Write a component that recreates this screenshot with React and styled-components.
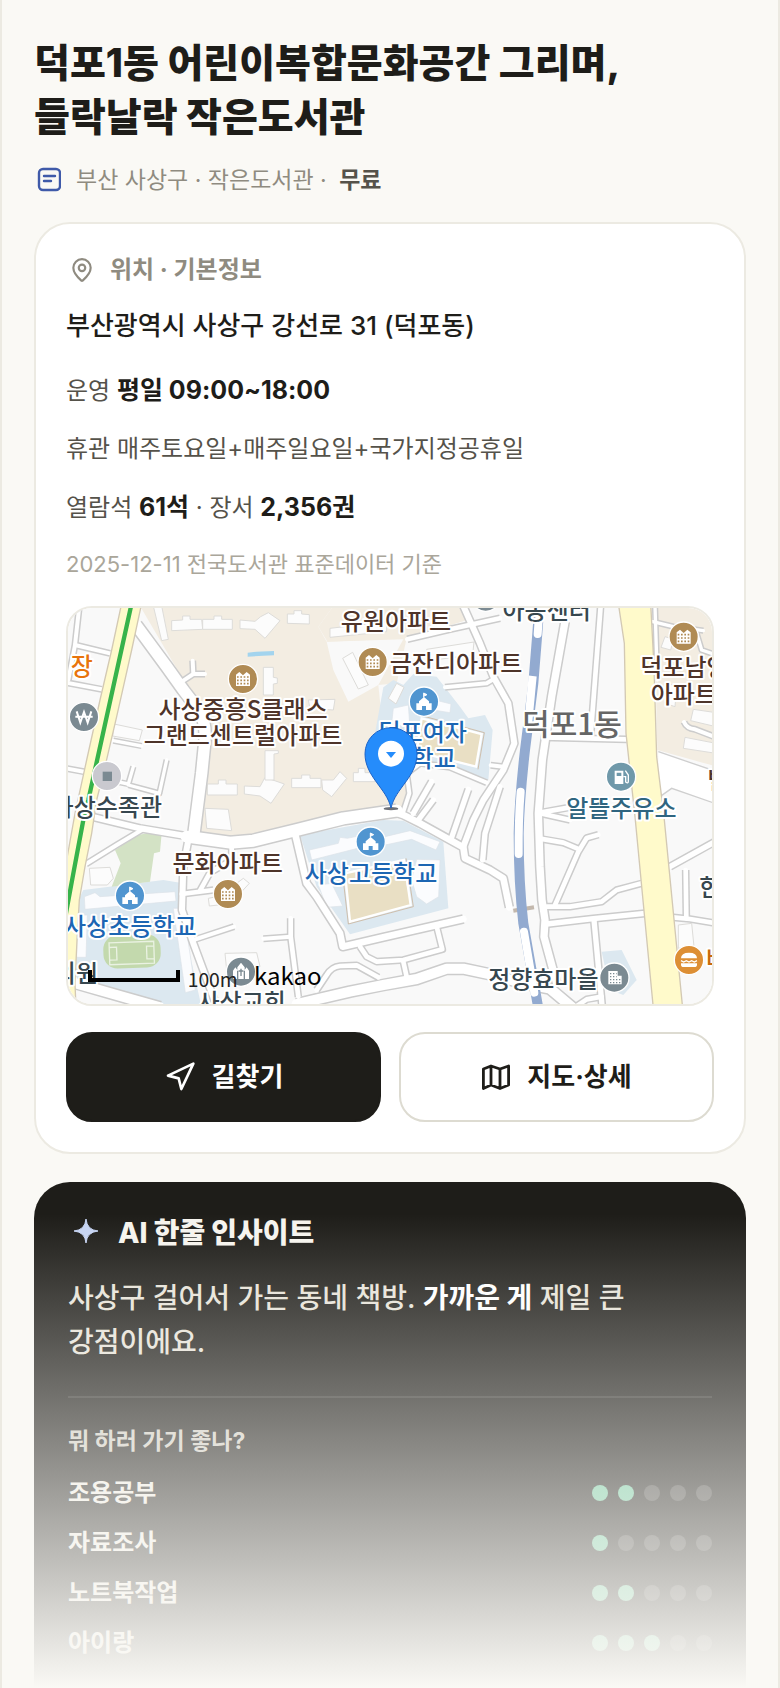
import React from "react";
import styled, { createGlobalStyle } from "styled-components";
import { MapPin, Navigation } from "lucide-react";

const GlobalStyle = createGlobalStyle`
  * {
    box-sizing: border-box;
  }

  body {
    margin: 0;
    background: #faf9f5;
    color: #1e1d19;
    font-family: Inter, "Noto Sans CJK KR", sans-serif;
  }

  h1, h2, h3, p, ul {
    margin: 0;
    padding: 0;
  }
`;

const Page = styled.main`
  position: relative;
  min-height: 100vh;
  padding: 36px 32px 0;
  border: 2px solid #eceae2;
  border-width: 0 2px;
  overflow: hidden;
`;

const Title = styled.h1`
  font-size: 39px;
  font-weight: 800;
  line-height: 54px;
  word-break: keep-all;
`;

const Meta = styled.div`
  display: flex;
  align-items: center;
  gap: 15px;
  margin: 18px 0 24px;
  color: #8f8b80;
  font-size: 23px;
  line-height: 36px;
`;

const Price = styled.strong`
  margin-left: 6px;
  color: #55524a;
  font-weight: 600;
`;

const Card = styled.section`
  padding: 28px 30px 30px;
  background: #fff;
  border: 2px solid #eceae2;
  border-radius: 36px;
`;

const CardHeader = styled.h2`
  display: flex;
  align-items: center;
  gap: 15px;
  padding-left: 3px;
  color: #8f8b80;
  font-size: 24px;
  font-weight: 700;
  line-height: 36px;
`;

const Address = styled.p`
  margin: 18px 0 24px;
  font-size: 26px;
  font-weight: 500;
  line-height: 40px;
`;

const InfoList = styled.div`
  display: flex;
  flex-direction: column;
  gap: 18px;
`;

const Info = styled.p`
  color: #55524a;
  font-size: 24px;
  line-height: 40px;

  strong {
    color: #1e1d19;
    font-size: 25px;
    font-weight: 700;
  }
`;

const Source = styled.p`
  margin: 20px 0 26px;
  color: #aaa69a;
  font-size: 22px;
  line-height: 32px;
`;

const MapFrame = styled.div`
  height: 400px;
  border: 2px solid #eceae2;
  border-radius: 26px;
  overflow: hidden;

  svg {
    display: block;
    width: 100%;
    height: 100%;
  }
`;

const Actions = styled.div`
  display: grid;
  grid-template-columns: 1fr 1fr;
  gap: 18px;
  margin-top: 26px;
`;

const Action = styled.button`
  display: flex;
  align-items: center;
  justify-content: center;
  gap: 16px;
  height: 90px;
  border: 2px solid ${(props) => (props.$primary ? "#1e1d19" : "#dddbd1")};
  border-radius: 26px;
  background: ${(props) => (props.$primary ? "#1e1d19" : "#fff")};
  color: ${(props) => (props.$primary ? "#fff" : "#1e1d19")};
  font-family: inherit;
  font-size: 26px;
  font-weight: 700;
  line-height: 36px;
  cursor: pointer;
`;

const InsightCard = styled.section`
  margin-top: 28px;
  padding: 32px 34px 28px;
  border-radius: 36px 36px 0 0;
  background: #1e1d19;
`;

const InsightTitle = styled.h2`
  display: flex;
  align-items: center;
  gap: 14px;
  color: #f6f4ee;
  font-size: 28px;
  font-weight: 800;
  line-height: 38px;
`;

const InsightText = styled.p`
  margin: 24px 0 32px;
  color: #e6e2d8;
  font-size: 28px;
  font-weight: 500;
  line-height: 44px;
  word-break: keep-all;

  strong {
    color: #fff;
    font-weight: 700;
  }
`;

const Scores = styled.div`
  padding-top: 26px;
  border-top: 2px solid rgba(255, 255, 255, 0.1);
`;

const ScoresTitle = styled.h3`
  margin-bottom: 18px;
  color: #cfccc2;
  font-size: 23px;
  font-weight: 700;
  line-height: 34px;
`;

const ScoreList = styled.ul`
  display: flex;
  flex-direction: column;
  gap: 16px;
  list-style: none;
`;

const ScoreRow = styled.li`
  display: flex;
  align-items: center;
  justify-content: space-between;
  color: #f0ede5;
  font-size: 24px;
  font-weight: 600;
  line-height: 34px;
`;

const Dots = styled.span`
  display: flex;
  gap: 10px;
`;

const Dot = styled.span`
  width: 16px;
  height: 16px;
  border-radius: 50%;
  background: ${(props) => (props.$on ? "#6fc79d" : "rgba(255, 255, 255, 0.18)")};
`;

const Fade = styled.div`
  position: absolute;
  right: -2px;
  bottom: 0;
  left: -2px;
  height: 474px;
  background: linear-gradient(rgba(250, 249, 245, 0), #faf9f5);
  pointer-events: none;
`;

const MapLabel = styled.text`
  fill: ${(props) => props.$color || "#4e342a"};
  font-family: "Noto Sans CJK KR", sans-serif;
  font-size: ${(props) => props.$size || 72}px;
  font-weight: 500;
  paint-order: stroke;
  stroke: #fff;
  stroke-width: 12px;
  stroke-linejoin: round;
`;

const MapCaption = styled.text`
  fill: ${(props) => (props.$brand ? "#000" : "#222")};
  font-family: "Noto Sans CJK KR", sans-serif;
  font-size: ${(props) => (props.$brand ? 72 : 58)}px;
`;

const BLUE = "#1c66b3";
const SLATE = "#37474f";

const roads = [
  { w: 34, d: "M258 75L350 200L400 270L450 335Q468 370 465 420L455 520L432 700" },
  { w: 18, d: "M415 720L400 800L396 930L430 1030L500 1218" },
  { w: 18, d: "M125 650L270 685L420 710" },
  { w: 36, d: "M410 710L540 728L610 722L740 690L880 655L1040 632" },
  { w: 20, d: "M1030 635L1060 645L1110 670L1240 742L1245 775L1320 810L1360 835L1378 922" },
  { w: 20, d: "M735 700L770 850L800 890L870 1000L878 1040L1000 1012L1240 957" },
  { w: 14, d: "M930 1040L950 1070L980 1085L1060 1080L1177 1048L1160 980" },
  { w: 14, d: "M1060 1085L1070 1130" },
  { w: 30, d: "M740 1212L900 1175L1000 1155L1100 1137L1190 1106L1240 1106L1330 1125L1420 1150L1500 1166L1570 1225" },
  { w: 30, d: "M78 1150L200 1185L330 1222" },
  { w: 12, d: "M108 792L200 735L275 690" },
  { w: 14, d: "M545 740L545 780L480 818L450 872" },
  { w: 14, d: "M395 882L490 870" },
  { w: 12, d: "M430 1020L552 980" },
  { w: 14, d: "M722 955L722 1010L745 1190" },
  { w: 12, d: "M640 1016L722 1010" },
  { w: 14, d: "M800 1170L830 1125Q845 1100 870 1098L920 1096L985 1132" },
  { w: 12, d: "M75 135L180 160" },
  { w: 12, d: "M50 248L155 268" },
  { w: 12, d: "M88 18L75 135L55 240" },
  { w: 12, d: "M48 505L118 518" },
  { w: 10, d: "M190 422L275 438" },
  { w: 10, d: "M250 500L235 552L200 545" },
  { w: 10, d: "M350 480L328 580L235 555" },
  { w: 12, d: "M400 242L430 222L428 182M430 222L465 222" },
  { w: 14, d: "M1072 118L1200 88L1350 55" },
  { w: 18, d: "M1240 18L1290 130L1330 230L1375 310L1393 430L1360 510L1300 600L1270 660L1240 740" },
  { w: 12, d: "M1185 262L1310 250L1335 235" },
  { w: 12, d: "M1310 548L1200 502L1110 490L1070 520L1078 580L1060 635" },
  { w: 12, d: "M1360 500L1322 496" },
  { w: 16, d: "M1145 545L1090 640" },
  { w: 16, d: "M1150 600L1105 660" },
  { w: 16, d: "M1255 568L1205 712" },
  { w: 16, d: "M1350 560L1305 700L1298 780" },
  { w: 22, d: "M1545 65L1505 290L1477 480L1465 640L1470 800L1476 900L1485 960L1482 1010L1520 1150" },
  { w: 14, d: "M1652 18L1622 408" },
  { w: 14, d: "M1480 412L1730 418" },
  { w: 14, d: "M1470 638L1560 622M1470 640L1560 660" },
  { w: 14, d: "M1470 716L1540 728L1588 748" },
  { w: 14, d: "M1645 704L1610 714L1585 755L1515 915" },
  { w: 14, d: "M1490 920L1560 920L1655 905L1700 870L1775 850" },
  { w: 16, d: "M1490 972L1630 956L1785 940" },
  { w: 16, d: "M1632 960L1657 1225" },
  { w: 14, d: "M1570 1225L1610 1198L1655 1190" },
  { w: 16, d: "M1860 800L1995 725" },
  { w: 14, d: "M1907 810L1909 955" },
  { w: 14, d: "M1870 952L1920 957L1998 970" },
  { w: 10, d: "M1808 65L1870 80L1960 92" },
  { w: 10, d: "M1940 100L1955 150L1998 165" },
  { w: 12, d: "M1902 366Q1910 385 1935 388L1998 412" },
  { w: 10, d: "M1815 18L1822 240" },
];

const buildings = [
  "365,62 398,60 398,48 420,48 420,58 455,58 458,88 365,92",
  "458,58 492,58 492,48 515,48 515,58 547,58 547,88 458,88",
  "570,60 615,64 632,50 655,38 690,62 645,115 615,88 570,86",
  "712,42 732,42 732,32 755,32 755,42 778,44 778,72 712,70",
  "310,18 335,18 355,118 335,122",
  "640,202 670,202 670,232 682,234 682,250 670,252 670,285 640,285",
  "472,552 505,552 505,540 528,540 528,552 562,552 562,585 472,585",
  "583,558 630,560 645,532 703,552 663,610 630,588 583,582",
  "645,452 685,452 685,460 672,462 672,540 645,540",
  "725,535 755,535 755,525 780,525 780,535 813,535 813,563 725,563",
  "815,540 850,540 870,515 890,535 845,590 818,570",
  "910,518 925,518 925,505 945,505 945,518 975,518 975,545 910,545",
  "465,625 535,628 545,692 470,685",
  "840,85 1010,65 1010,95 840,112",
  "878,175 908,157 955,255 925,267",
  "775,300 855,298 850,330 780,325",
  "192,372 277,390 268,422 188,408",
  "1130,148 1272,126 1268,165 1135,182",
  "1015,295 1040,250 1062,262 1038,312",
  "118,805 180,802 190,835 172,855 122,855",
  "560,850 580,835 598,850 575,875",
  "475,895 500,890 505,915 478,918",
  "525,1060 620,1058 630,1100 530,1110",
  "1930,328 1998,338 1998,380 1922,362",
  "1905,412 1998,430 1998,460 1900,445",
  "1845,110 1870,118 1862,150 1833,142",
  "1855,250 1880,260 1875,320 1845,310",
  "1885,975 1925,970 1932,1040 1885,1045",
];

const schoolBuildings = [
  "778,750 865,730 870,712 892,715 955,702 962,735 785,780",
  "805,855 845,850 872,905 878,918 830,922",
  "1005,710 1080,692 1170,725 1158,750 1085,718 1005,735",
  "1100,778 1170,780 1166,890 1130,912 1100,890 1085,840",
  "103,890 135,878 150,890 375,875 378,903 105,928",
  "370,925 400,925 436,1170 406,1178",
  "80,945 112,945 108,1072 80,1072",
  "1030,325 1075,315 1080,385 1025,370",
  "1155,300 1203,312 1200,338 1150,330",
];

// Apartment block glyph used inside the brown markers
const ApartmentMarker = ({ x, y }) => (
  <g transform={`translate(${x} ${y})`}>
    <circle r="44" fill="#b08b54" stroke="#fff" strokeWidth="4" />
    <path d="M-21 21V-13L-11 -21L0 -11L11 -21L21 -13V21Z" fill="#fff" />
    <path d="M-18 -6H18M-18 4H18M-18 14H18" stroke="#b08b54" strokeWidth="5" strokeDasharray="5 5" />
  </g>
);

const SchoolMarker = ({ x, y }) => (
  <g transform={`translate(${x} ${y})`}>
    <circle r="44" fill="#5095d0" stroke="#fff" strokeWidth="4" />
    <path d="M-1 -26V-12M-1 -26L9 -21L-1 -16" fill="#fff" stroke="#fff" strokeWidth="3" />
    <path d="M0 -14L15 -1V5H23V25H6V13H-6V25H-23V5H-15V-1Z" fill="#fff" />
  </g>
);

const LocationMap = () => (
  <svg viewBox="54 24 1932 1188" preserveAspectRatio="xMidYMid slice" role="img" aria-label="덕포1동 지도">
    <rect width="2050" height="1300" fill="#f9f9f9" />
    <g fill="#f3ede2">
      <path d="M270 18H1225L1250 60L1070 115L1040 250L985 255L1000 400L1050 500L1075 600L1040 640L740 680L600 715L440 710L475 370L400 240Z" />
      <path d="M1812 18H2000V500L1822 450Z" />
    </g>
    <path d="M850 18L805 80L830 125L850 210L895 305L985 255L1060 118L830 125" fill="#f9f9f9" />
    <path d="M850 18H1225L1250 60L1070 115L832 125L805 80Z" fill="#f3ede2" />
    <g fill="#dce8f0">
      <path d="M1000 262L1030 240L1060 255L1090 222L1160 230L1230 320L1255 355L1305 345L1328 390L1315 540L1200 495L1020 500L975 400Z" />
      <path d="M750 705L1000 660L1060 662L1180 725L1195 925L900 1003L800 860Z" />
      <path d="M100 870L340 840L390 848L388 920L450 1200V1218H330L75 1130L85 900Z" />
      <path d="M1655 1055L1715 1050L1760 1140L1720 1185L1680 1170Z" />
    </g>
    <path d="M265 705L290 700H335L330 755L312 760L300 845L185 860L212 790L195 750Z" fill="#d3e2c5" />
    <g fill="#e9dfc4" stroke="#fff" strokeWidth="7">
      <path d="M1115 355L1295 402L1278 500L1100 455Z" />
      <path d="M885 820L1062 780L1082 915L900 965Z" />
    </g>
    <g fill="none" stroke="#c7a98a" strokeWidth="2">
      <path d="M1115 347L1303 398L1284 508" />
      <path d="M877 815L895 972L1090 920L1068 775" />
    </g>
    <g fill="#fcfcfc" stroke="#dddcd9" strokeWidth="3">
      {buildings.map((points) => (
        <polygon key={points} points={points} />
      ))}
    </g>
    <g fill="#fbfcfe" stroke="#dde2e8" strokeWidth="2">
      {schoolBuildings.map((points) => (
        <polygon key={points} points={points} />
      ))}
    </g>
    <path d="M593 158L620 155L672 153V166L640 167L593 170Z" fill="#a3d4ee" />
    <g transform="rotate(-2 246 1053)">
      <rect x="160" y="1004" width="172" height="100" rx="42" fill="#c3d9ad" />
      <path d="M178 1026H312V1092H178ZM178 1040H200V1078H178M312 1040H290V1078H312" fill="none" stroke="#eaf2e2" strokeWidth="4" />
    </g>

    <path d="M1825 455L2000 515V612L1865 565L1828 590Z" fill="#fff" />
    <path d="M1825 455L2000 515M2000 612L1865 565L1830 590" fill="none" stroke="#cfcfcf" strokeWidth="4" />
    <g fill="none" stroke="#cccccc" strokeLinejoin="round">
      {roads.map(({ w, d }) => (
        <path key={d} d={d} strokeWidth={w + 9} />
      ))}
    </g>
    <g fill="none" stroke="#fff" strokeLinejoin="round" strokeLinecap="round">
      {roads.map(({ w, d }) => (
        <path key={d} d={d} strokeWidth={w} />
      ))}
    </g>

    <g fill="#fffacb" stroke="#d3c9b4" strokeWidth="4">
      <path d="M215 10L185 150L150 300L110 480L75 640L50 780L40 850V1225H78L75 1150L82 1000L88 900L105 800L125 700L140 600L165 500L200 350L245 150L275 10Z" />
      <path d="M1705 10L1723 130L1728 400L1755 650L1810 1225H1898L1842 650L1820 470L1812 200L1802 10Z" />
    </g>
    <path d="M245 10L115 600L100 660L70 820L46 950" fill="none" stroke="#37b34a" strokeWidth="13" />

    <path d="M1390 932L1452 922" stroke="#c3b8ad" strokeWidth="12" />
    <path d="M1468 18L1462 100L1450 250L1425 450Q1408 600 1406 700Q1406 850 1420 970L1465 1225" fill="none" stroke="#92aad0" strokeWidth="30" />
    <g fill="none" stroke="#fff" strokeWidth="24" strokeLinecap="round">
      <path d="M1466 60L1463 102" />
      <path d="M1448 228L1434 375" strokeLinecap="butt" />
      <path d="M1412 575Q1405 660 1406 762" />
      <path d="M1422 995L1453 1178" />
    </g>

    <ApartmentMarker x={579} y={237} />
    <ApartmentMarker x={968} y={186} />
    <ApartmentMarker x={534} y={882} />
    <ApartmentMarker x={1901} y={110} />
    <SchoolMarker x={1122} y={305} />
    <SchoolMarker x={962} y={725} />
    <SchoolMarker x={240} y={887} />

    <g stroke="#fff" strokeWidth="4">
      <circle cx="102" cy="351" r="44" fill="#7b8a92" />
      <circle cx="573" cy="1115" r="44" fill="#7b8a92" />
      <circle cx="1693" cy="1133" r="44" fill="#7b8a92" />
      <circle cx="1307" cy="-10" r="44" fill="#7b8a92" />
      <circle cx="171" cy="528" r="44" fill="#c9c9cf" />
      <circle cx="1713" cy="530" r="44" fill="#7099aa" />
      <circle cx="1917" cy="1080" r="44" fill="#dd8f35" />
    </g>
    <path d="M80 334L91 368L102 336L113 368L124 334M76 350H128" fill="none" stroke="#fff" strokeWidth="6" />
    <rect x="158" y="515" width="28" height="28" fill="#7b8a92" />
    <path d="M549 1137V1112L556 1102L564 1112V1137ZM582 1137V1112L590 1102L597 1112V1137ZM562 1137V1102L573 1088L584 1102V1137Z" fill="#fff" />
    <path d="M573 1106V1128M566 1113H580M563 1112V1137M583 1112V1137" stroke="#7b8a92" strokeWidth="4" />
    <path d="M1675 1113H1703V1127H1715V1153H1675Z" fill="#fff" />
    <path d="M1680 1121H1700M1680 1130H1700M1680 1139H1712M1680 1148H1712" stroke="#7b8a92" strokeWidth="4" strokeDasharray="4 5" />
    <path d="M1694 512H1720V552H1694ZM1700 518V528H1714V518Z" fill="#fff" fillRule="evenodd" />
    <path d="M1720 530H1727V546Q1735 552 1735 544V525L1726 512" fill="none" stroke="#fff" strokeWidth="4" />
    <path d="M1893 1075Q1893 1058 1917 1058T1941 1075ZM1893 1090H1941V1094Q1941 1101 1933 1101H1901Q1893 1101 1893 1094Z" fill="#fff" />
    <path d="M1893 1082L1901 1086L1909 1082L1917 1086L1925 1082L1933 1086L1941 1082" fill="none" stroke="#fff" strokeWidth="4" />

    <MapLabel x="579" y="354" textAnchor="middle">사상중흥S클래스</MapLabel>
    <MapLabel x="579" y="433" textAnchor="middle">그랜드센트럴아파트</MapLabel>
    <MapLabel x="1038" y="90" textAnchor="middle">유원아파트</MapLabel>
    <MapLabel x="1218" y="215" textAnchor="middle">금잔디아파트</MapLabel>
    <MapLabel x="1771" y="229">덕포남양</MapLabel>
    <MapLabel x="1802" y="308">아파트</MapLabel>
    <MapLabel x="533" y="815" textAnchor="middle">문화아파트</MapLabel>
    <MapLabel x="1972" y="568">빌라</MapLabel>
    <MapLabel x="1118" y="423" textAnchor="middle" $color={BLUE}>덕포여자</MapLabel>
    <MapLabel x="1118" y="500" textAnchor="middle" $color={BLUE}>중학교</MapLabel>
    <MapLabel x="963" y="845" textAnchor="middle" $color={BLUE}>사상고등학교</MapLabel>
    <MapLabel x="241" y="1005" textAnchor="middle" $color={BLUE}>사상초등학교</MapLabel>
    <MapLabel x="1490" y="58" textAnchor="middle" $color={SLATE}>아동센터</MapLabel>
    <MapLabel x="336" y="648" textAnchor="end" $color={SLATE}>사상수족관</MapLabel>
    <MapLabel x="144" y="1146" textAnchor="end" $color={SLATE}>의원</MapLabel>
    <MapLabel x="575" y="1233" textAnchor="middle" $color={SLATE}>사상교회</MapLabel>
    <MapLabel x="1480" y="1164" textAnchor="middle" $color={SLATE}>정향효마을</MapLabel>
    <MapLabel x="1948" y="887" $color={SLATE}>한의원</MapLabel>
    <MapLabel x="62" y="224" $color="#e8740c">장</MapLabel>
    <MapLabel x="1968" y="1104" $color="#c76a0c">버거</MapLabel>
    <MapLabel x="1714" y="650" textAnchor="middle" $color="#2f6580">알뜰주유소</MapLabel>
    <MapLabel x="1566" y="405" textAnchor="middle" $color="#666" $size={90}>덕포1동</MapLabel>

    <ellipse cx="1023" cy="626" rx="22" ry="5" fill="#6c7078" />
    <path d="M1023 624C1010 565 945 530 945 461A78 78 0 0 1 1101 461C1101 530 1036 565 1023 624Z" fill="#258cfb" stroke="#1c63c7" strokeWidth="3" />
    <circle cx="1023" cy="461" r="39" fill="#fff" />
    <path d="M1008 456H1038L1023 474Z" fill="#258cfb" />

    <path d="M120 1110V1140H384V1110" fill="none" stroke="#000" strokeWidth="12" />
    <MapCaption x="413" y="1161">100m</MapCaption>
    <MapCaption x="612" y="1156" $brand>kakao</MapCaption>
  </svg>
);

const LibraryIcon = () => (
  <svg width="27" height="30" viewBox="3 0 27 30" fill="none" stroke="#3f5aa9" strokeWidth="2.4" strokeLinecap="round" aria-hidden="true">
    <rect x="8" y="4" width="21" height="21" rx="4" />
    <path d="M13 11H24M13 16H20" />
  </svg>
);

const MapIcon = () => (
  <svg width="30" height="30" viewBox="0 0 30 30" fill="none" stroke="currentColor" strokeWidth="2.8" strokeLinejoin="round" aria-hidden="true">
    <path d="M2.4 7L10 4L19 7L27.6 4V23L19 26.5L10 23L2.4 26.5ZM10 4V23M19 7V26.5" />
  </svg>
);

const SparkIcon = () => (
  <svg width="36" height="36" viewBox="0 0 36 36" fill="#c5d3f2" aria-hidden="true">
    <path d="M18 4Q19 15 30 16Q19 17 18 28Q17 17 6 16Q17 15 18 4Z" stroke="#c5d3f2" strokeWidth="1" />
  </svg>
);

const scores = [
  { name: "조용공부", value: 2 },
  { name: "자료조사", value: 1 },
  { name: "노트북작업", value: 2 },
  { name: "아이랑", value: 3 },
];

const App = () => (
  <>
    <GlobalStyle />
    <Page>
      <Title>
        덕포1동 어린이복합문화공간 그리며,
        <br />
        들락날락 작은도서관
      </Title>
      <Meta>
        <LibraryIcon />
        <span>
          부산 사상구 · 작은도서관 · <Price>무료</Price>
        </span>
      </Meta>

      <Card>
        <CardHeader>
          <MapPin size={26} strokeWidth={2} aria-hidden="true" />
          위치 · 기본정보
        </CardHeader>
        <Address>부산광역시 사상구 강선로 31 (덕포동)</Address>
        <InfoList>
          <Info>
            운영 <strong>평일 09:00~18:00</strong>
          </Info>
          <Info>휴관 매주토요일+매주일요일+국가지정공휴일</Info>
          <Info>
            열람석 <strong>61석</strong> · 장서 <strong>2,356권</strong>
          </Info>
        </InfoList>
        <Source>2025-12-11 전국도서관 표준데이터 기준</Source>
        <MapFrame>
          <LocationMap />
        </MapFrame>
        <Actions>
          <Action type="button" $primary>
            <Navigation size={32} strokeWidth={2} aria-hidden="true" />
            길찾기
          </Action>
          <Action type="button">
            <MapIcon />
            지도·상세
          </Action>
        </Actions>
      </Card>

      <InsightCard>
        <InsightTitle>
          <SparkIcon />
          AI 한줄 인사이트
        </InsightTitle>
        <InsightText>
          사상구 걸어서 가는 동네 책방. <strong>가까운 게</strong> 제일 큰 강점이에요.
        </InsightText>
        <Scores>
          <ScoresTitle>뭐 하러 가기 좋나?</ScoresTitle>
          <ScoreList>
            {scores.map(({ name, value }) => (
              <ScoreRow key={name}>
                {name}
                <Dots role="img" aria-label={`5점 중 ${value}점`}>
                  {[1, 2, 3, 4, 5].map((step) => (
                    <Dot key={step} $on={step <= value} />
                  ))}
                </Dots>
              </ScoreRow>
            ))}
          </ScoreList>
        </Scores>
      </InsightCard>
      <Fade />
    </Page>
  </>
);

export default App;
